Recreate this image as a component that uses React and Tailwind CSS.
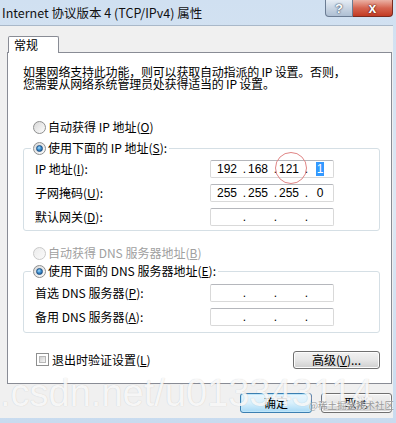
import React from "react";

function Radio({ checked, disabled }) {
  return (
    <span
      className={
        "relative inline-flex items-center justify-center w-[13px] h-[13px] rounded-full border shrink-0 " +
        (disabled
          ? "border-[#c9c9c9] bg-gradient-to-br from-[#ececec] to-[#fafafa]"
          : "border-[#8e8f8f] bg-gradient-to-br from-[#d8d8d8] to-[#fdfdfd]")
      }
    >
      {checked && (
        <span className="w-[7px] h-[7px] rounded-full bg-[radial-gradient(circle_at_40%_35%,#a9dcfa_0%,#3c8fd0_45%,#14508e_100%)] border border-[#1e4f82]" />
      )}
    </span>
  );
}

function Checkbox() {
  return (
    <span className="inline-flex w-[13px] h-[13px] border border-[#8e8f8f] bg-white p-[2px] shrink-0">
      <span className="flex-1 bg-gradient-to-br from-[#cfcfcf] to-[#f6f6f6] border border-[#b8b8b8]" />
    </span>
  );
}

function IpBox({ values = ["", "", "", ""], selectLast, circle }) {
  return (
    <div className="relative w-[124px] h-[18px] border border-[#d9d9d9] border-t-[#b5b7bc] rounded-[2px] bg-white flex items-center pl-[4px] text-[12px] leading-[14px] font-['Liberation_Sans',sans-serif]">
      {values.map((v, i) => (
        <React.Fragment key={i}>
          <span className="w-[24px] text-center">
            {selectLast && i === 3 ? (
              <span className="bg-[#3399ff] text-white px-[1px]">{v}</span>
            ) : (
              v
            )}
          </span>
          {i < 3 && <span className="w-[7px] text-right">.</span>}
        </React.Fragment>
      ))}
      {circle && (
        <span className="absolute left-[64px] top-[-9px] w-[32px] h-[32px] rounded-full border-[1.5px] border-[#e08585] pointer-events-none" />
      )}
    </div>
  );
}

function Row({ label, children }) {
  return (
    <div className="flex items-center h-[18px]">
      <span className="w-[186px] pl-[11px] leading-[14px]">{label}</span>
      {children}
    </div>
  );
}

function WinButton({ children, primary, className = "" }) {
  return (
    <div
      className={
        "flex items-center justify-center rounded-[3px] border leading-[14px] " +
        (primary
          ? "border-[#3c7fb1] bg-gradient-to-b from-[#eaf6fd] via-[#d9f0fc] to-[#a7d9f5] shadow-[inset_0_0_0_1px_#bfe6fa]"
          : "border-[#707070] bg-gradient-to-b from-[#f2f2f2] via-[#e6e6e6] to-[#cfcfcf] shadow-[inset_0_0_0_1px_#fcfcfc]") +
        " " +
        className
      }
    >
      {children}
    </div>
  );
}

export default function App() {
  return (
    <div className="relative w-[396px] h-[423px] overflow-hidden flex flex-col bg-gradient-to-b from-[#d0e0f1] via-[#dde8f4] to-[#c8dbef] font-['Noto_Sans_CJK_SC',sans-serif] text-[12px] text-black">
      {/* Title bar */}
      <div className="h-[25px] flex items-start shrink-0">
        <div className="pl-[2px] pt-[5px] leading-[16px] text-[12.5px] font-['Noto_Sans_CJK_SC',sans-serif] text-[#111]">
          Internet 协议版本 4 (TCP/IPv4) 属性
        </div>
        <div className="ml-auto mr-[3px] flex">
          <div className="w-[28px] h-[17px] rounded-bl-[4px] border border-t-0 border-[#6b7c93] bg-gradient-to-b from-[#e6edf5] via-[#c9d5e3] to-[#aebfd3] flex items-center justify-center text-white font-bold text-[13px] leading-[15px] font-['Liberation_Sans',sans-serif] [text-shadow:0_0_2px_#34465e,0_0_1px_#34465e]">
            ?
          </div>
          <div className="w-[40px] h-[17px] rounded-br-[4px] border border-t-0 border-l-0 border-[#7a2a1f] bg-gradient-to-b from-[#eab1a5] via-[#d56450] to-[#c23a22] flex items-center justify-center text-white font-bold text-[14px] leading-[15px] font-['Liberation_Sans',sans-serif] [text-shadow:0_0_2px_#5a150c,0_0_1px_#5a150c]">
            x
          </div>
        </div>
      </div>

      {/* Body */}
      <div className="flex-1 mr-[3px] mb-[5px] bg-[#f0f0f0] border-t border-[#a9b8c9] flex flex-col pl-[7px]">
        {/* Tab */}
        <div className="flex mt-[10px]">
          <div className="ml-[1px] w-[51px] h-[17px] mb-[-1px] relative z-10 bg-white border border-b-0 border-[#898c95] rounded-t-[2px] pl-[5px] leading-[16px] text-[12px]">
            常规
          </div>
        </div>
        {/* Panel */}
        <div className="w-[385px] h-[332px] border border-[#898c95] bg-white flex flex-col">
          <div className="pl-[15px] mt-[13px] leading-[12px] text-[12px] tracking-[-0.2px]">
            <div>如果网络支持此功能，则可以获取自动指派的 IP 设置。否则，</div>
            <div>您需要从网络系统管理员处获得适当的 IP 设置。</div>
          </div>

          <div className="flex items-center gap-[2px] h-[14px] mt-[30px] pl-[25px] leading-[14px]">
            <Radio />
            <span>自动获得 IP 地址(<u>O</u>)</span>
          </div>

          <fieldset className="ml-[15px] mr-[11px] mt-[7px] border border-[#d5dfe5] rounded-[3px] p-0 pb-[4px] pt-[5px] flex flex-col gap-[6px]">
            <legend className="ml-[7px] px-[2px] h-[14px] flex items-center gap-[2px] leading-[14px]">
              <Radio checked />
              <span>使用下面的 IP 地址(<u>S</u>):</span>
            </legend>
            <Row label={<>IP 地址(<u>I</u>):</>}>
              <IpBox values={["192", "168", "121", "1"]} selectLast circle />
            </Row>
            <Row label={<>子网掩码(<u>U</u>):</>}>
              <IpBox values={["255", "255", "255", "0"]} />
            </Row>
            <Row label={<>默认网关(<u>D</u>):</>}>
              <IpBox />
            </Row>
          </fieldset>

          <div className="flex items-center gap-[2px] h-[14px] mt-[15px] pl-[25px] leading-[14px] text-[#a0a0a0]">
            <Radio disabled />
            <span>自动获得 DNS 服务器地址(<u>B</u>)</span>
          </div>

          <fieldset className="ml-[15px] mr-[11px] mt-[4px] border border-[#d5dfe5] rounded-[3px] p-0 pb-[6px] pt-[6px] flex flex-col gap-[6px]">
            <legend className="ml-[7px] px-[2px] h-[14px] flex items-center gap-[2px] leading-[14px]">
              <Radio checked />
              <span>使用下面的 DNS 服务器地址(<u>E</u>):</span>
            </legend>
            <Row label={<>首选 DNS 服务器(<u>P</u>):</>}>
              <IpBox />
            </Row>
            <Row label={<>备用 DNS 服务器(<u>A</u>):</>}>
              <IpBox />
            </Row>
          </fieldset>

          <div className="flex items-center mt-[18px] h-[17px] pl-[28px] pr-[11px]">
            <Checkbox />
            <span className="ml-[3px] leading-[14px]">退出时验证设置(<u>L</u>)</span>
            <WinButton className="ml-auto w-[87px] h-[18px]">
              高级(<u>V</u>)...
            </WinButton>
          </div>
        </div>

        {/* Bottom buttons */}
        <div className="flex justify-end gap-[9px] mt-[9px] pr-[1px]">
          <WinButton primary className="w-[72px] h-[20px]">
            确定
          </WinButton>
          <WinButton className="w-[71px] h-[20px]">取消</WinButton>
        </div>
      </div>

      {/* Watermark overlay */}
      <div className="absolute left-[0px] top-[374px] text-[38px] leading-[38px] font-['Liberation_Sans',sans-serif] text-white/85 [text-shadow:0_0_1px_rgba(0,0,0,0.2)] whitespace-nowrap pointer-events-none">
        .csdn.net/u013343114
      </div>
      <div className="absolute left-[309px] top-[400px] text-[9.5px] leading-[11px] text-[#9a9a9a] [text-shadow:0_0_2px_#fff] whitespace-nowrap pointer-events-none">
        @稀土掘金技术社区
      </div>
    </div>
  );
}
